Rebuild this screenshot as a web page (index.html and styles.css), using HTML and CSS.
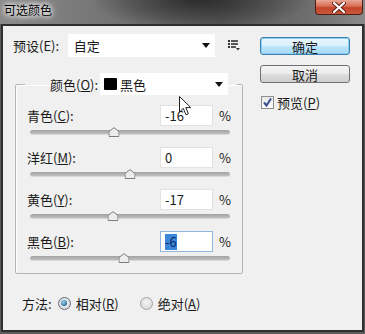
FILE: index.html
```html
<!DOCTYPE html>
<html>
<head>
    <title>可选颜色</title>
    <link rel="stylesheet" href="styles.css">
</head>
<body>
    <div class="window">
        <!-- Title bar -->
        <div class="titlebar">
            <span class="title">可选颜色</span>
            <div class="close">
                <svg width="14" height="11" viewBox="0 0 14 11">
                    <path d="M2 1 L12 10 M12 1 L2 10" stroke="#5a1a10" stroke-width="4" stroke-linecap="round"/>
                    <path d="M2 1 L12 10 M12 1 L2 10" stroke="#ffffff" stroke-width="2.2" stroke-linecap="round"/>
                </svg>
            </div>
        </div>

        <div class="client">
            <div class="main">
                <div class="preset-row">
                    <label class="preset-label">预设(E):</label>
                    <div class="select preset-select">
                        <span>自定</span>
                        <span class="arrow"></span>
                    </div>
                    <svg class="list-icon" width="13" height="11" viewBox="0 0 13 11">
                        <rect x="0" y="0" width="2" height="2" fill="#333"/>
                        <rect x="3" y="0" width="7" height="2" fill="#555"/>
                        <rect x="0" y="3" width="2" height="2" fill="#333"/>
                        <rect x="3" y="3" width="7" height="2" fill="#555"/>
                        <rect x="0" y="6" width="2" height="2" fill="#333"/>
                        <rect x="3" y="6" width="5" height="2" fill="#555"/>
                        <path d="M8 8 L12 8 L10 10.5 Z" fill="#333"/>
                    </svg>
                </div>

                <fieldset class="group">
                    <legend class="group-legend">
                        <label class="legend-label">颜色(<u>O</u>):</label>
                        <div class="select color-select">
                            <span class="swatch"></span>
                            <span class="color-name">黑色</span>
                            <span class="arrow"></span>
                        </div>
                    </legend>

                    <div class="channel">
                        <div class="channel-head">
                            <label class="channel-label">青色(<u>C</u>):</label>
                            <div class="num">-16</div>
                            <span class="pct">%</span>
                        </div>
                        <div class="slider">
                            <div class="track"></div>
                            <svg class="thumb" style="left: 42%" width="11" height="10" viewBox="0 0 11 10"><path d="M0.5 9.5 L0.5 4.5 L5.5 0.7 L10.5 4.5 L10.5 9.5 Z" fill="#ececec" stroke="#7d7d7d"/></svg>
                        </div>
                    </div>

                    <div class="channel">
                        <div class="channel-head">
                            <label class="channel-label">洋红(<u>M</u>):</label>
                            <div class="num">0</div>
                            <span class="pct">%</span>
                        </div>
                        <div class="slider">
                            <div class="track"></div>
                            <svg class="thumb" style="left: 50%" width="11" height="10" viewBox="0 0 11 10"><path d="M0.5 9.5 L0.5 4.5 L5.5 0.7 L10.5 4.5 L10.5 9.5 Z" fill="#ececec" stroke="#7d7d7d"/></svg>
                        </div>
                    </div>

                    <div class="channel">
                        <div class="channel-head">
                            <label class="channel-label">黄色(<u>Y</u>):</label>
                            <div class="num">-17</div>
                            <span class="pct">%</span>
                        </div>
                        <div class="slider">
                            <div class="track"></div>
                            <svg class="thumb" style="left: 41.5%" width="11" height="10" viewBox="0 0 11 10"><path d="M0.5 9.5 L0.5 4.5 L5.5 0.7 L10.5 4.5 L10.5 9.5 Z" fill="#ececec" stroke="#7d7d7d"/></svg>
                        </div>
                    </div>

                    <div class="channel">
                        <div class="channel-head">
                            <label class="channel-label">黑色(<u>B</u>):</label>
                            <div class="num focused"><span class="selected">-6</span></div>
                            <span class="pct">%</span>
                        </div>
                        <div class="slider">
                            <div class="track"></div>
                            <svg class="thumb" style="left: 47%" width="11" height="10" viewBox="0 0 11 10"><path d="M0.5 9.5 L0.5 4.5 L5.5 0.7 L10.5 4.5 L10.5 9.5 Z" fill="#ececec" stroke="#7d7d7d"/></svg>
                        </div>
                    </div>
                </fieldset>

                <div class="method">
                    <span class="method-label">方法:</span>
                    <span class="radio checked"></span>
                    <span class="radio-text">相对(<u>R</u>)</span>
                    <span class="radio"></span>
                    <span class="radio-text">绝对(<u>A</u>)</span>
                </div>
            </div>

            <div class="side">
                <div class="button default">确定</div>
                <div class="button">取消</div>
                <div class="check-row">
                    <span class="checkbox">
                        <svg width="11" height="11" viewBox="0 0 11 11"><path d="M2 5.5 L4.5 8.5 L9 1.5" fill="none" stroke="#3b4f8f" stroke-width="2"/></svg>
                    </span>
                    <span class="check-text">预览(<u>P</u>)</span>
                </div>
            </div>
        </div>

        <!-- mouse pointer over the colour dropdown -->
        <svg class="pointer" width="13" height="20" viewBox="0 0 13 20">
            <path d="M0.5 0.5 L0.5 16 L4.3 12.4 L7 18.8 L9.4 17.8 L6.8 11.6 L11.8 11.6 Z" fill="#fff" stroke="#222" stroke-width="1"/>
        </svg>
    </div>
</body>
</html>
```

FILE: styles.css
```css
body {
    margin: 0;
    font-family: "Noto Sans CJK SC", "Liberation Sans", sans-serif;
    font-size: 13px;
    color: #1a1a1a;
}

.window {
    position: relative;
    width: 365px;
    height: 334px;
    display: flex;
    flex-direction: column;
    background: #5c5c5c;
    overflow: hidden;
}

.titlebar {
    height: 24px;
    display: flex;
    align-items: flex-start;
    background:
        radial-gradient(ellipse 110px 30px at 200px 0, #2c2c2c, rgba(40, 40, 40, 0) 100%),
        linear-gradient(90deg, #8a8a8a 0%, #707070 35%, #5a5a5a 60%, #6e6e6e 85%, #8a8a8a 100%);
}

.title {
    padding: 2px 0 0 4px;
    font-size: 12px;
    line-height: 16px;
    color: #000;
    text-shadow: 0 0 4px #fff, 0 0 6px #fff, 0 0 8px #e8e8e8;
}

.close {
    margin-left: auto;
    margin-right: 2px;
    width: 46px;
    height: 14px;
    border: 1px solid #4a2018;
    border-top: none;
    border-radius: 0 0 4px 4px;
    background: linear-gradient(#e9a896 0%, #d76b52 45%, #c4442b 55%, #c95a3c 100%);
    display: flex;
    align-items: center;
    justify-content: center;
}

.client {
    flex: 1;
    margin: 0 1px 2px 1px;
    border: 2px solid #2f2f2f;
    background: #f0f0f0;
    display: flex;
}

.main {
    width: 228px;
    padding: 8px 0 0 10px;
}

.preset-row {
    height: 23px;
    display: flex;
    align-items: center;
}

.preset-label {
    width: 55px;
}

.select {
    height: 23px;
    box-sizing: border-box;
    background: #fff;
    display: flex;
    align-items: center;
    position: relative;
}

.preset-select {
    width: 148px;
    padding-left: 6px;
}

.arrow {
    position: absolute;
    right: 5px;
    top: 9px;
    width: 0;
    height: 0;
    border-left: 4px solid transparent;
    border-right: 4px solid transparent;
    border-top: 5px solid #111;
}

.list-icon {
    margin-left: 13px;
}

.group {
    width: 203px;
    min-width: 0;
    margin: 16px 0 0 2px;
    padding: 10px 12px 10px 11px;
    border: 1px solid #b4b4b4;
    border-radius: 2px;
    box-shadow: inset 1px 1px 0 #fff;
}

.group-legend {
    width: 212px;
    margin-left: -2px;
    padding: 0;
    display: flex;
    align-items: center;
}

.legend-label {
    margin-left: 25px;
    width: 50px;
}

.color-select {
    width: 128px;
    height: 22px;
    padding-left: 4px;
}

.swatch {
    width: 13px;
    height: 12px;
    background: #000;
    border-radius: 1px;
}

.color-name {
    margin-left: 3px;
}

.channel {
    margin-bottom: 10px;
}

.channel:last-child {
    margin-bottom: 0;
}

.channel-head {
    height: 21px;
    display: flex;
    align-items: center;
}

.channel-label {
    flex: 1;
}

.num {
    width: 53px;
    height: 21px;
    box-sizing: border-box;
    padding-left: 4px;
    background: #fff;
    border: 1px solid #e2e2e2;
    display: flex;
    align-items: center;
}

.num.focused {
    border-color: #8fb6de;
}

.selected {
    background: #3a86d8;
    color: #0b2a66;
    line-height: 16px;
}

.pct {
    margin-left: 6px;
    width: 11px;
}

.slider {
    position: relative;
    height: 10px;
    margin: 1px 0 0 3px;
}

.track {
    position: absolute;
    left: 0;
    right: 0;
    top: 3px;
    height: 4px;
    border-radius: 3px;
    background: linear-gradient(#a2a2a2, #c0c0c0);
    border-bottom: 1px solid #d8d8d8;
}

.thumb {
    position: absolute;
    top: 0;
    transform: translateX(-50%);
}

.method {
    margin-top: 20px;
    padding-left: 9px;
    height: 18px;
    display: flex;
    align-items: center;
    white-space: nowrap;
}

.method-label {
    margin-right: 6px;
}

.radio {
    width: 11px;
    height: 11px;
    border-radius: 50%;
    border: 1px solid #a2a2a2;
    background: radial-gradient(circle at 50% 40%, #f4f4f4, #d2d2d2);
    margin-right: 5px;
    position: relative;
}

.radio.checked {
    border-color: #5a6c80;
}

.radio.checked::after {
    content: "";
    position: absolute;
    left: 2.5px;
    top: 2.5px;
    width: 6px;
    height: 6px;
    border-radius: 50%;
    background: radial-gradient(circle at 40% 35%, #9fd6f2, #2d6f9c 70%, #174a6e);
}

.radio-text {
    margin-right: 21px;
}

.side {
    margin-left: 19px;
    padding-top: 11px;
    width: 90px;
}

.button {
    height: 18px;
    box-sizing: border-box;
    border: 1px solid #707070;
    border-radius: 3px;
    background: linear-gradient(#f3f3f3 0%, #ebebeb 50%, #dddddd 51%, #cfcfcf 100%);
    display: flex;
    align-items: center;
    justify-content: center;
    margin-bottom: 10px;
}

.button.default {
    border-color: #3c7fb1;
    background: linear-gradient(#eaf6fd 0%, #d9f0fc 50%, #bee6fd 51%, #a7d9f5 100%);
    box-shadow: inset 0 0 0 1px #8fd0f0;
}

.check-row {
    margin-top: 5px;
    display: flex;
    align-items: center;
}

.checkbox {
    width: 11px;
    height: 11px;
    border: 1px solid #8e8f8f;
    background: linear-gradient(#e6e6e6, #ffffff);
    margin: 0 3px 0 1px;
    display: flex;
    align-items: center;
    justify-content: center;
}

.pointer {
    position: absolute;
    left: 179px;
    top: 96px;
}
```
